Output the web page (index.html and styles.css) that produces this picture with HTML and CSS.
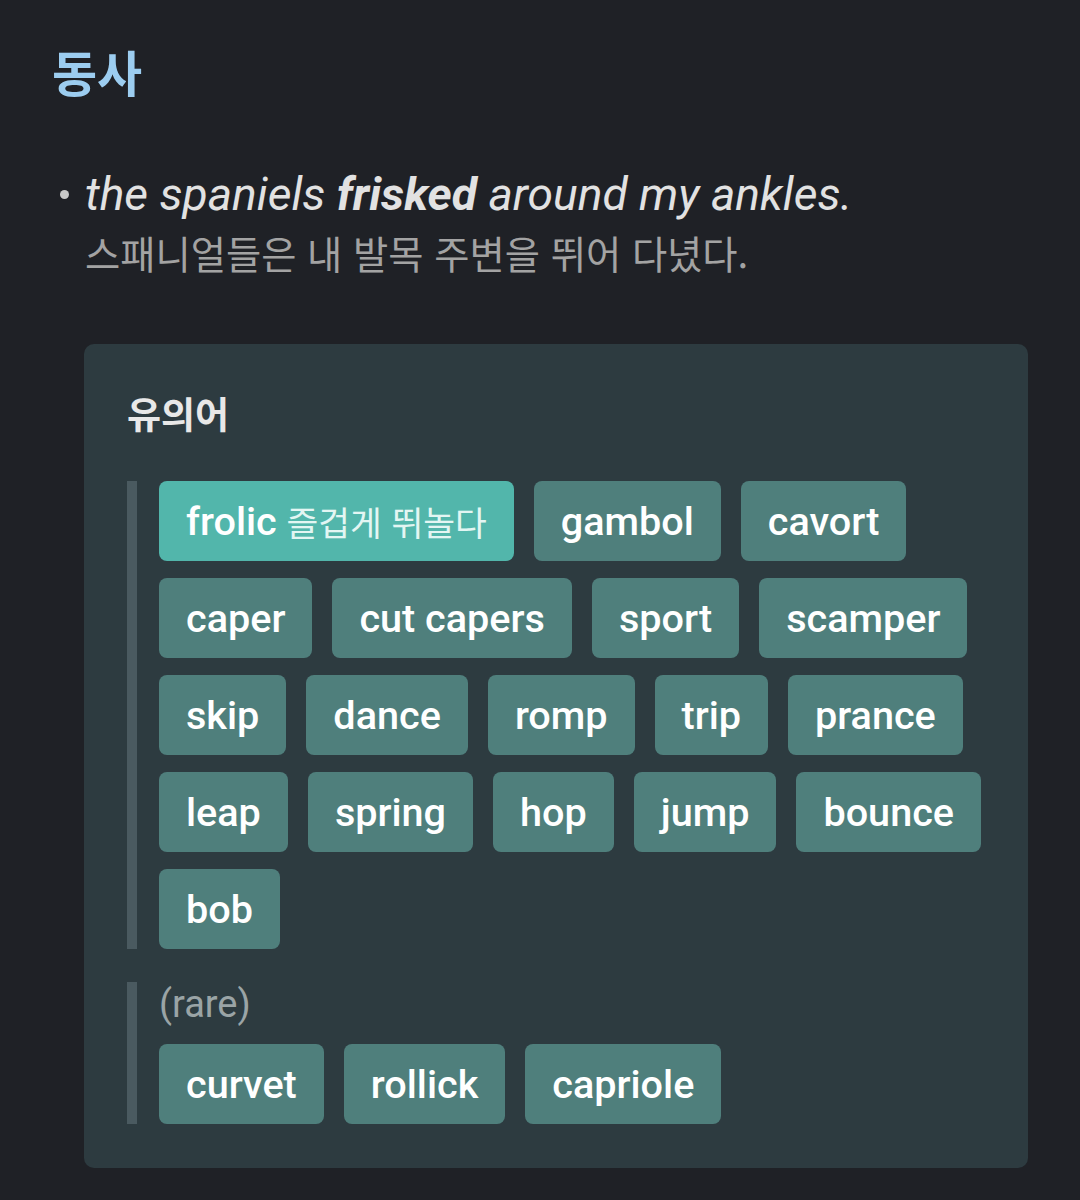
FILE: index.html
```html
<!DOCTYPE html>
<html lang="ko">
<head>
<meta charset="utf-8">
<link rel="stylesheet" href="styles.css">
</head>
<body>
<main class="page">
  <h1 class="pos">동사</h1>
  <ul class="examples">
    <li class="example">
      <p class="en">the spaniels <b>frisked</b> around my ankles.</p>
      <p class="ko">스패니얼들은 내 발목 주변을 뛰어 다녔다.</p>
    </li>
  </ul>
  <section class="card">
    <h2 class="card-title">유의어</h2>
    <div class="group">
      <div class="chips">
        <span class="chip chip-main">frolic <span class="chip-ko">즐겁게 뛰놀다</span></span>
        <span class="chip">gambol</span>
        <span class="chip">cavort</span>
        <span class="chip">caper</span>
        <span class="chip">cut capers</span>
        <span class="chip">sport</span>
        <span class="chip">scamper</span>
        <span class="chip">skip</span>
        <span class="chip">dance</span>
        <span class="chip">romp</span>
        <span class="chip">trip</span>
        <span class="chip">prance</span>
        <span class="chip">leap</span>
        <span class="chip">spring</span>
        <span class="chip">hop</span>
        <span class="chip">jump</span>
        <span class="chip">bounce</span>
        <span class="chip">bob</span>
      </div>
    </div>
    <div class="group group-rare">
      <div class="label">(rare)</div>
      <div class="chips">
        <span class="chip">curvet</span>
        <span class="chip">rollick</span>
        <span class="chip">capriole</span>
      </div>
    </div>
  </section>
</main>
</body>
</html>
```

FILE: styles.css
```css
html, body {
  margin: 0;
  padding: 0;
  background: #1f2126;
}
body {
  font-family: Roboto, "Noto Sans CJK KR", sans-serif;
  color: #e4e4e4;
}
.page {
  padding: 34px 52px 34px 52px;
}
.pos {
  margin: 0;
  font-family: "Noto Sans CJK KR", sans-serif;
  font-size: 49px;
  line-height: 74px;
  font-weight: 700;
  color: #9ccdf0;
}
.examples {
  list-style: none;
  margin: 56px 0 0 0;
  padding: 0 0 0 33px;
}
.example {
  position: relative;
}
.example::before {
  content: "";
  position: absolute;
  left: -25px;
  top: 26px;
  width: 9px;
  height: 9px;
  border-radius: 50%;
  background: #c8c8c8;
}
.en {
  margin: 0;
  font-style: italic;
  font-size: 46.2px;
  line-height: 60px;
  color: #e2e2e2;
}
.en b {
  font-weight: 700;
}
.ko {
  margin: 0;
  font-family: "Noto Sans CJK KR", sans-serif;
  font-size: 38.3px;
  line-height: 58px;
  color: #a3a3a3;
}
.card {
  margin: 62px 0 0 32px;
  background: #2d3b40;
  border-radius: 10px;
  padding: 40px 43px 44px 43px;
}
.card-title {
  margin: 0 0 39px 0;
  font-family: "Noto Sans CJK KR", sans-serif;
  font-size: 37px;
  line-height: 58px;
  font-weight: 700;
  color: #e8e8e8;
}
.group {
  border-left: 10px solid #4a5a60;
  padding-left: 22px;
}
.group-rare {
  margin-top: 33px;
}
.label {
  font-size: 38px;
  line-height: 44px;
  color: #9aa4a6;
  margin-bottom: 18px;
}
.chips {
  display: flex;
  flex-wrap: wrap;
  gap: 17px 20px;
}
.chip {
  display: inline-flex;
  align-items: center;
  height: 80px;
  box-sizing: border-box;
  padding: 0 27px;
  border-radius: 8px;
  background: #4f7f7c;
  color: #ffffff;
  font-size: 39.6px;
  font-weight: 500;
  white-space: pre;
}
.chip-main {
  background: #52b6ab;
}
.chip-ko {
  font-family: "Noto Sans CJK KR", sans-serif;
  font-weight: 400;
  font-size: 34.5px;
  color: #e3f6f3;
}
```
